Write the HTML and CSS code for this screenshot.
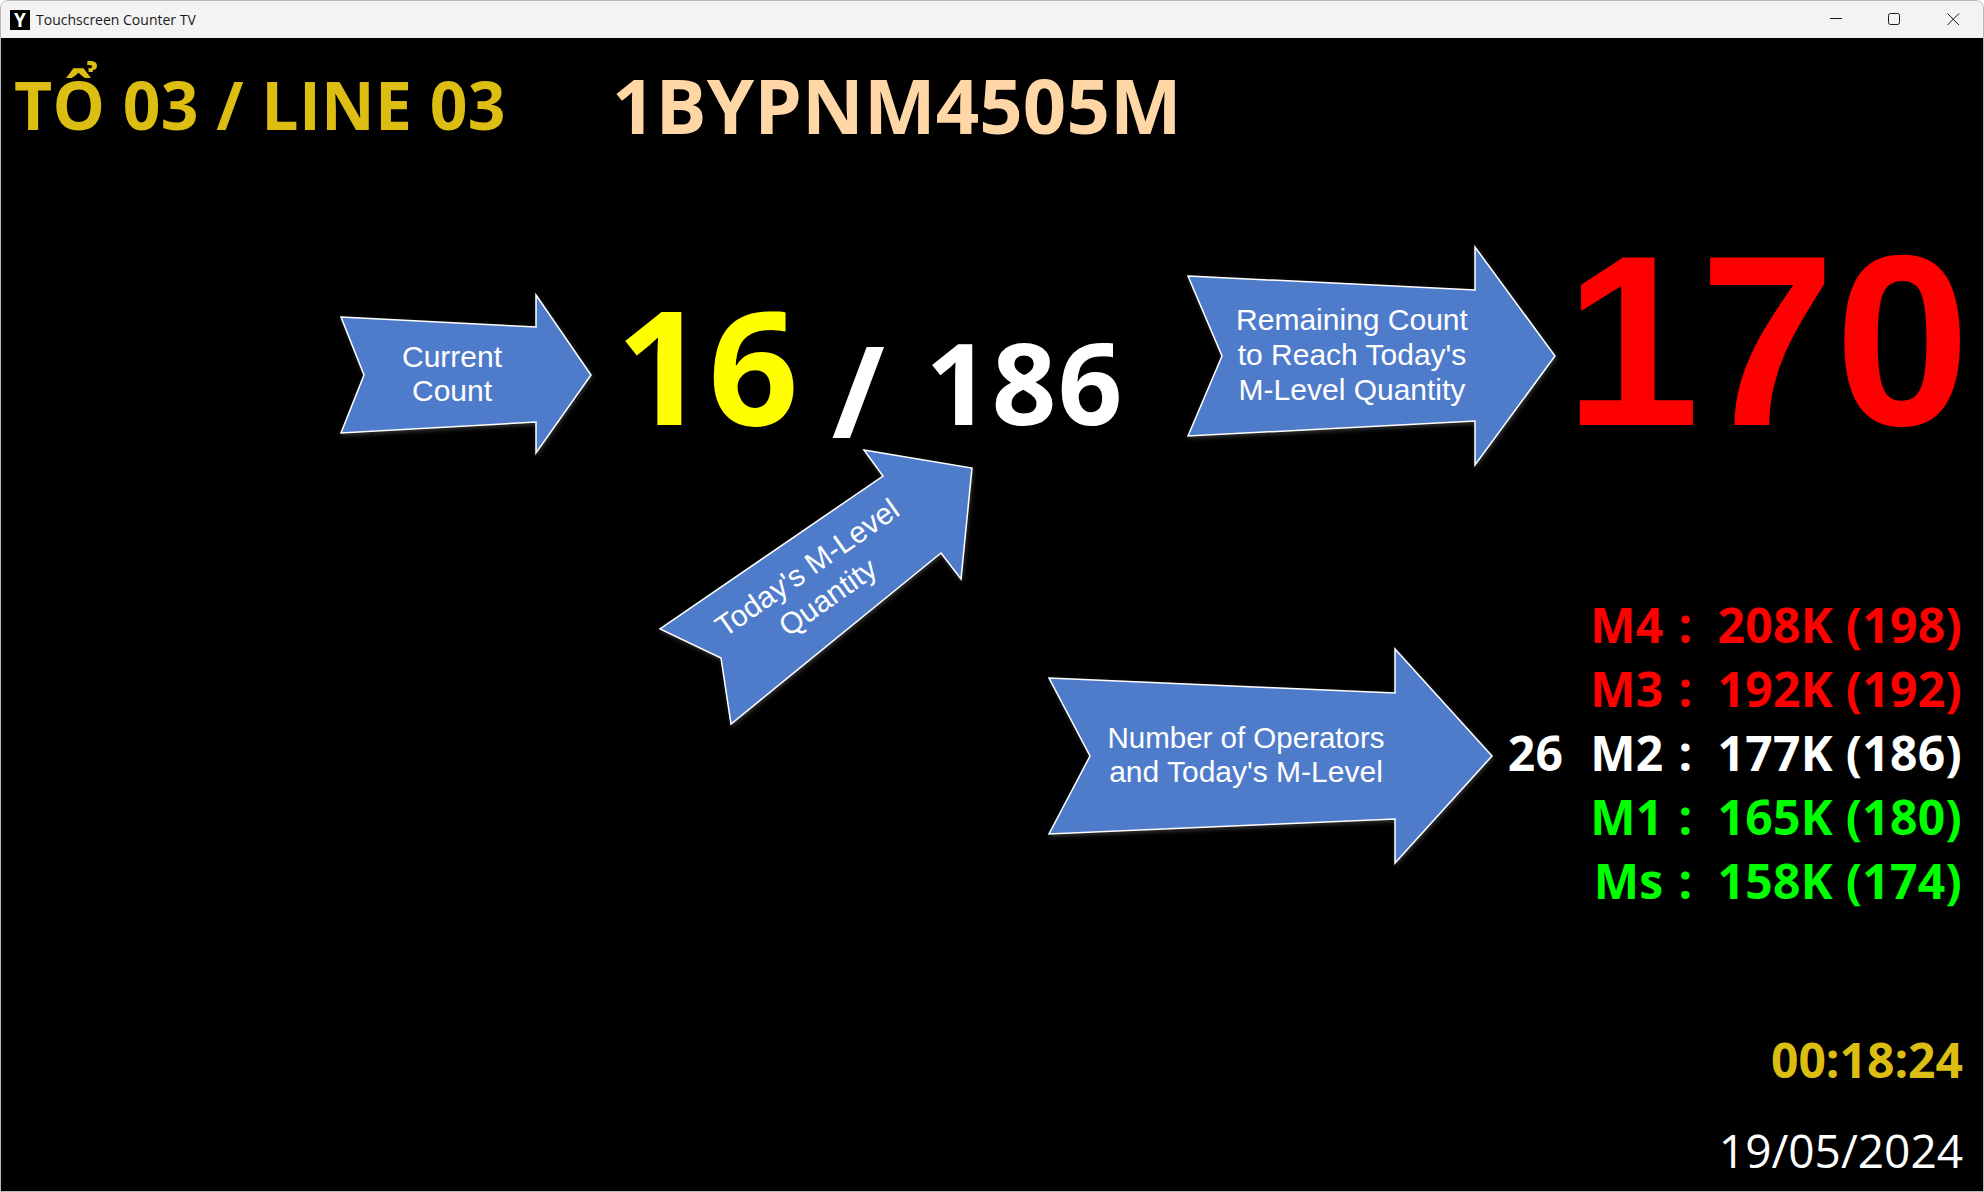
FILE: index.html
```html
<!DOCTYPE html>
<html>
<head>
	<title>Touchscreen Counter TV</title>
	<link rel="stylesheet" href="styles.css">
</head>
<body>
	<div class="window">
		<div class="titlebar">
			<span class="app-icon">Y</span>
			<span class="app-name">Touchscreen Counter TV</span>
			<svg class="controls" width="130" height="38" viewBox="1830 0 130 38">
				<path d="M1830 18.5h12"/>
				<rect x="1888.5" y="13.5" width="11" height="11" rx="2"/>
				<path d="M1947.5 13.5l11.5 11.5M1959 13.5l-11.5 11.5"/>
			</svg>
		</div>
		<div class="screen">
			<!-- arrows sit over the counters, coordinates are window pixels -->
			<svg class="arrows" viewBox="0 38 1984 1154">
				<polygon points="341,317 536,327 536,295 591,375 536,453 536,422 341,433 364,375"/>
				<text x="452" y="367">Current</text>
				<text x="452" y="401">Count</text>

				<polygon points="1188,276 1475,290 1475,247 1555,356 1475,465 1475,421 1188,436 1222,356"/>
				<text x="1352" y="330">Remaining Count</text>
				<text x="1352" y="365">to Reach Today's</text>
				<text x="1352" y="400">M-Level Quantity</text>

				<polygon points="864,450 972,468 961,579 941,553 731,724 721,658 660,629 883,476"/>
				<g transform="translate(813 576) rotate(-35)">
					<text x="0" y="0">Today's M-Level</text>
					<text x="0" y="36">Quantity</text>
				</g>

				<polygon points="1049,678 1395,693 1395,649 1492,756 1395,863 1395,819 1049,834 1090,756"/>
				<text class="tight" x="1246" y="748">Number of Operators</text>
				<text x="1246" y="782">and Today's M-Level</text>
			</svg>

			<div class="header">
				<div class="line-name">TỔ 03 / LINE 03</div>
				<div class="part-no">1BYPNM4505M</div>
			</div>

			<div class="counts">
				<div class="current">
					<span class="done">16</span><span class="slash">/</span><span class="target">186</span>
				</div>
				<div class="remaining">170</div>
			</div>

			<div class="levels">
				<span class="lvl red">M4</span><span class="sep red">:</span><span class="val red">208K (198)</span>
				<span class="lvl red">M3</span><span class="sep red">:</span><span class="val red">192K (192)</span>
				<span class="operators">26</span><span class="lvl">M2</span><span class="sep">:</span><span class="val">177K (186)</span>
				<span class="lvl green">M1</span><span class="sep green">:</span><span class="val green">165K (180)</span>
				<span class="lvl green">Ms</span><span class="sep green">:</span><span class="val green">158K (174)</span>
			</div>

			<div class="clock">00:18:24</div>
			<div class="date">19/05/2024</div>
		</div>
	</div>
</body>
</html>
```

FILE: styles.css
```css
html, body {
	margin: 0;
	height: 100%;
	background: #fff;
	overflow: hidden;
}
.window {
	height: 100vh;
	box-sizing: border-box;
	display: flex;
	flex-direction: column;
	border: 1px solid #b9b9b9;
	border-radius: 8px 8px 0 0;
	overflow: hidden;
}
.titlebar {
	height: 37px;
	flex: none;
	display: flex;
	align-items: center;
	padding-left: 9px;
	background: #f3f3f3;
	position: relative;
}
.app-icon {
	width: 20px;
	height: 20px;
	background: #000;
	color: #fff;
	font: bold 19px/20px "Open Sans", sans-serif;
	text-align: center;
}
.app-name {
	margin-left: 6px;
	font: 14px "Open Sans", sans-serif;
	color: #1a1a1a;
}
.controls {
	margin-left: auto;
	margin-right: 23px;
	margin-top: -1px;
	fill: none;
	stroke: #1a1a1a;
	stroke-width: 1;
}
.screen {
	flex: 1;
	position: relative;
	background: #000;
	font-family: "Open Sans", sans-serif;
	font-weight: 700;
}
.arrows {
	position: absolute;
	left: -1px;
	top: 0;
	width: 1984px;
	height: 1154px;
}
.arrows polygon {
	fill: #4f7cca;
	stroke: #fff;
	stroke-width: 1.5;
	filter: drop-shadow(1px 2px 2px rgba(255, 255, 255, 0.2));
}
.arrows text {
	font-family: "Liberation Sans", Arial, sans-serif;
	font-weight: 400;
	font-size: 30px;
	fill: #fff;
	text-anchor: middle;
}
.arrows .tight {
	font-size: 29.5px;
}
.header {
	display: flex;
	align-items: flex-start;
	padding: 22px 0 0 13px;
}
.line-name {
	width: 598px;
	margin-top: 4px;
	font-size: 66px;
	line-height: 80px;
	letter-spacing: 0.3px;
	color: #dcbd12;
}
.part-no {
	font-size: 76px;
	line-height: 90px;
	letter-spacing: 0.1px;
	color: #ffd7a6;
}
.counts {
	display: flex;
	align-items: baseline;
	justify-content: space-between;
	margin-top: 71px;
	padding: 0 13px 0 615px;
}
.current {
	line-height: 0;
}
.done {
	font-size: 158px;
	letter-spacing: 2px;
	color: #ff0;
}
.slash {
	margin-left: 31px;
	font-size: 128px;
	vertical-align: -13px;
	color: #fff;
}
.target {
	margin-left: 41px;
	font-size: 113px;
	letter-spacing: 1.5px;
	color: #fff;
}
.remaining {
	font-family: "Liberation Sans", Arial, sans-serif;
	font-size: 243px;
	line-height: 240px;
	color: #f00;
}
.levels {
	display: grid;
	grid-template-columns: auto auto auto auto;
	justify-content: end;
	margin-top: 132px;
	padding-right: 21px;
	font-size: 48px;
	line-height: 64px;
	letter-spacing: 0.3px;
	color: #fff;
}
.lvl {
	grid-column: 2;
	justify-self: end;
}
.operators {
	grid-column: 1;
	margin-right: 27px;
}
.sep {
	margin: 0 25px 0 15px;
}
.val {
	justify-self: end;
}
.red {
	color: #f00;
}
.green {
	color: #0f0;
}
.clock, .date {
	text-align: right;
	padding-right: 20px;
	line-height: 60px;
}
.clock {
	margin-top: 117px;
	font-size: 48px;
	color: #dcbd12;
}
.date {
	margin-top: 30px;
	font-size: 46px;
	font-weight: 400;
	color: #fff;
}
```
